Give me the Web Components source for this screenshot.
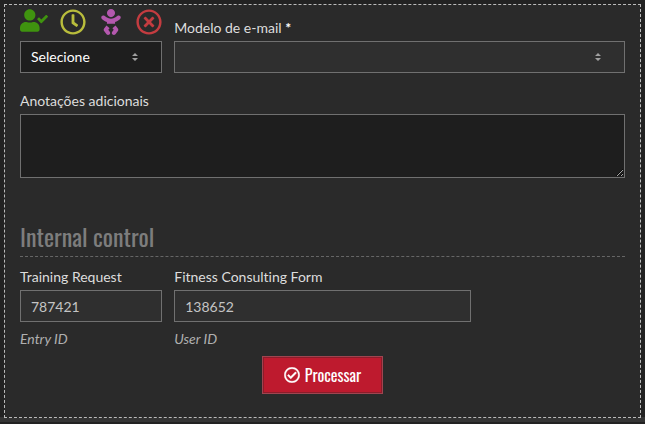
<!DOCTYPE html>
<html lang="pt-BR">
<head>
<meta charset="utf-8">
<meta name="viewport" content="width=device-width, initial-scale=1">
<title>Processar</title>
<style>
  body {
    --color-panel: #2a2a2a;
    --color-field: #2f2f2f;
    --color-dark: #1e1e1e;
    --color-border: #707070;
    --color-label: #ddd;
    --color-value: #c4c4c4;
    --color-muted: #b0b0b0;
    --color-title: #7d7d7d;
    --color-red: #be1a2e;
    --font-narrow: Oswald, "Liberation Sans Narrow", "Roboto Condensed", "Liberation Sans", sans-serif;

    margin: 0;
    padding: 4px;
    color-scheme: dark;
    font: 14px/20px Lato, sans-serif;
    font-variant-ligatures: none;
    color: var(--color-label);
    background: linear-gradient(to top, #343434 5px, #222 5px);
  }
</style>
</head>
<body>

<request-panel>
  <form-row>
    <status-select>Selecione</status-select>
    <template-select class="wide">Modelo de e-mail</template-select>
  </form-row>
  <notes-field>Anotações adicionais</notes-field>
  <section-title>Internal control</section-title>
  <form-row>
    <id-field value="787421" hint="Entry ID">Training Request</id-field>
    <id-field class="half" value="138652" hint="User ID">Fitness Consulting Form</id-field>
  </form-row>
  <process-button>Processar</process-button>
</request-panel>

<script>
const arrows = `url("data:image/svg+xml,%3Csvg xmlns='http://www.w3.org/2000/svg' width='6' height='10'%3E%3Cpath d='M0 4L3 1l3 3zM0 6l3 3 3-3z' fill='%23a0a0a0'/%3E%3C/svg%3E")`;

// shared by every control
const fieldStyle = `
  * { box-sizing: border-box; }
  label { display: block; }
  input, select, textarea {
    display: block;
    width: 100%;
    height: 32px;
    margin: 0;
    padding: 0 10px;
    border: 1px solid var(--color-border);
    border-radius: 0;
    font: inherit;
    color: var(--color-value);
    background-color: var(--color-field);
  }
  select {
    appearance: none;
    background-image: ${arrows};
    background-repeat: no-repeat;
    background-position: right 23px center;
  }
`;

class RequestPanel extends HTMLElement {
  constructor() {
    super();
    this.attachShadow({ mode: 'open' }).innerHTML = `
      <style>
        :host { display: block; }
        form {
          padding: 4px 15px 23px;
          border: 1px dashed #bbb;
          background: var(--color-panel);
        }
      </style>
      <form><slot></slot></form>
    `;
  }
}

class FormRow extends HTMLElement {
  constructor() {
    super();
    this.attachShadow({ mode: 'open' }).innerHTML = `
      <style>
        :host {
          display: grid;
          grid-template-columns: repeat(4, 1fr);
          gap: 12px;
          align-items: end;
        }
        ::slotted(.half) { grid-column: span 2; }
        ::slotted(.wide) { grid-column: span 3; }
      </style>
      <slot></slot>
    `;
  }
}

class StatusSelect extends HTMLElement {
  constructor() {
    super();
    this.attachShadow({ mode: 'open' }).innerHTML = `
      <style>
        ${fieldStyle}
        :host { display: block; }
        .icons {
          display: flex;
          justify-content: space-between;
          height: 32px;
        }
        svg { width: 26px; height: 26px; }
        .check { width: 28px; height: 23px; color: #3f930f; }
        .clock { color: #b9bd3c; }
        .baby { color: #b458ae; }
        .cross { color: #c43c40; }
        select { color: #fff; background-color: var(--color-dark); }
      </style>
      <div class="icons">
        <svg class="check" viewBox="0 0 640 512" fill="currentColor"><path d="M224 256c70.7 0 128-57.3 128-128S294.7 0 224 0 96 57.3 96 128s57.3 128 128 128zm89.6 32h-16.7c-22.2 10.2-46.9 16-72.9 16s-50.6-5.8-72.9-16h-16.7C60.2 288 0 348.2 0 422.4V464c0 26.5 21.5 48 48 48h352c26.5 0 48-21.5 48-48v-41.6c0-74.2-60.2-134.4-134.4-134.4zm323-128.4l-27.8-28.1c-4.6-4.7-12.1-4.7-16.8-.1l-104.8 104-45.5-45.8c-4.6-4.7-12.1-4.7-16.8-.1l-28.1 27.9c-4.7 4.6-4.7 12.1-.1 16.8l81.7 82.3c4.6 4.7 12.1 4.7 16.8.1l141.3-140.2c4.6-4.7 4.7-12.2.1-16.8z"/></svg>
        <svg class="clock" viewBox="0 0 512 512" fill="currentColor"><path d="M256 8C119 8 8 119 8 256s111 248 248 248 248-111 248-248S393 8 256 8zm0 448c-110.5 0-200-89.5-200-200S145.5 56 256 56s200 89.5 200 200-89.5 200-200 200zm61.8-104.4l-84.9-61.7c-3.1-2.3-4.9-5.9-4.9-9.7V116c0-6.6 5.4-12 12-12h32c6.6 0 12 5.4 12 12v141.7l66.8 48.6c5.4 3.9 6.5 11.4 2.6 16.8L334.6 349c-3.9 5.3-11.4 6.5-16.8 2.6z"/></svg>
        <svg class="baby" viewBox="0 0 384 512" fill="currentColor"><path d="M192 160c44.2 0 80-35.8 80-80S236.2 0 192 0s-80 35.8-80 80 35.8 80 80 80zm-53.4 248.8l25.6-32-61.5-51.2L56.8 383c-11.4 14.2-11.7 34.4-.8 49l48 64c7.9 10.5 19.9 16 32 16 8.3 0 16.8-2.6 24-8 17.7-13.2 21.2-38.3 8-56l-29.4-39.2zm142.7-83.2l-61.5 51.2 25.6 32L216 448c-13.2 17.7-9.7 42.8 8 56 7.2 5.4 15.6 8 24 8 12.2 0 24.2-5.5 32-16l48-64c10.9-14.6 10.6-34.8-.8-49l-45.9-57.4zM376.7 145c-12.7-18.1-37.6-22.4-55.7-9.8l-40.6 28.5c-52.7 37-124.2 37-176.8 0L63 135.3C44.9 122.6 20 127 7.3 145-5.4 163.1-1 188 17 200.7l40.6 28.5c17 11.9 35.4 20.9 54.4 27.9V288h160v-30.8c19-7 37.4-16 54.4-27.9l40.6-28.5c18.1-12.8 22.4-37.7 9.7-55.8z"/></svg>
        <svg class="cross" viewBox="0 0 512 512" fill="currentColor"><path d="M256 8C119 8 8 119 8 256s111 248 248 248 248-111 248-248S393 8 256 8zm0 448c-110.5 0-200-89.5-200-200S145.5 56 256 56s200 89.5 200 200-89.5 200-200 200zm101.8-262.2L295.6 256l62.2 62.2c4.7 4.7 4.7 12.3 0 17l-22.6 22.6c-4.7 4.7-12.3 4.7-17 0L256 295.6l-62.2 62.2c-4.7 4.7-12.3 4.7-17 0l-22.6-22.6c-4.7-4.7-4.7-12.3 0-17l62.2-62.2-62.2-62.2c-4.7-4.7-4.7-12.3 0-17l22.6-22.6c4.7-4.7 12.3-4.7 17 0l62.2 62.2 62.2-62.2c4.7-4.7 12.3-4.7 17 0l22.6 22.6c4.7 4.7 4.7 12.3 0 17z"/></svg>
      </div>
      <select aria-label="Status"><option>${this.textContent}</option></select>
    `;
  }
}

class TemplateSelect extends HTMLElement {
  constructor() {
    super();
    this.attachShadow({ mode: 'open' }).innerHTML = `
      <style>
        ${fieldStyle}
        :host { display: block; }
        label { margin-bottom: 3px; }
        b { color: #fff; }
      </style>
      <label for="model"><slot></slot> <b>*</b></label>
      <select id="model" required><option></option></select>
    `;
  }
}

class NotesField extends HTMLElement {
  constructor() {
    super();
    this.attachShadow({ mode: 'open' }).innerHTML = `
      <style>
        ${fieldStyle}
        :host { display: block; margin-top: 18px; }
        label { margin-bottom: 3px; }
        textarea {
          height: 64px;
          padding: 6px 10px;
          resize: vertical;
          background-color: var(--color-dark);
        }
      </style>
      <label for="notes"><slot></slot></label>
      <textarea id="notes"></textarea>
    `;
  }
}

class SectionTitle extends HTMLElement {
  constructor() {
    super();
    this.attachShadow({ mode: 'open' }).innerHTML = `
      <style>
        :host { display: block; margin: 42px 0 10px; }
        h2 {
          margin: 0;
          padding-bottom: 4px;
          border-bottom: 1px dashed #666;
          font: 24px/32px var(--font-narrow);
          color: var(--color-title);
        }
      </style>
      <h2><slot></slot></h2>
    `;
  }
}

class IdField extends HTMLElement {
  constructor() {
    super();
    this.attachShadow({ mode: 'open' }).innerHTML = `
      <style>
        ${fieldStyle}
        :host { display: block; }
        label { margin-bottom: 3px; }
        .hint {
          margin-top: 7px;
          font-style: italic;
          color: var(--color-muted);
        }
      </style>
      <label for="id"><slot></slot></label>
      <input id="id" type="text" value="${this.getAttribute('value')}" aria-describedby="hint">
      <div class="hint" id="hint">${this.getAttribute('hint')}</div>
    `;
  }
}

class ProcessButton extends HTMLElement {
  constructor() {
    super();
    this.attachShadow({ mode: 'open' }).innerHTML = `
      <style>
        :host { display: flex; justify-content: center; margin-top: 7px; }
        button {
          display: flex;
          align-items: center;
          gap: 5px;
          height: 38px;
          padding: 0 21px;
          border: 1px solid #a04450;
          box-shadow: inset 0 0 0 1px #8c1c2a;
          font: 16px/24px var(--font-narrow);
          color: #fff;
          background: var(--color-red);
        }
        svg { width: 16px; height: 16px; }
      </style>
      <button type="button">
        <svg viewBox="0 0 512 512" fill="currentColor" stroke="currentColor" stroke-width="12"><path d="M256 8C119.033 8 8 119.033 8 256s111.033 248 248 248 248-111.033 248-248S392.967 8 256 8zm0 48c110.532 0 200 89.451 200 200 0 110.532-89.451 200-200 200-110.532 0-200-89.451-200-200 0-110.532 89.451-200 200-200m140.204 130.267l-22.536-22.718c-4.667-4.705-12.265-4.736-16.97-.068L215.346 303.697l-59.792-60.277c-4.667-4.705-12.265-4.736-16.97-.069l-22.719 22.536c-4.705 4.667-4.736 12.265-.068 16.971l90.781 91.516c4.667 4.705 12.265 4.736 16.97.068l172.589-171.204c4.704-4.668 4.734-12.266.067-16.971z"/></svg>
        <slot></slot>
      </button>
    `;
  }
}

customElements.define('request-panel', RequestPanel);
customElements.define('form-row', FormRow);
customElements.define('status-select', StatusSelect);
customElements.define('template-select', TemplateSelect);
customElements.define('notes-field', NotesField);
customElements.define('section-title', SectionTitle);
customElements.define('id-field', IdField);
customElements.define('process-button', ProcessButton);
</script>
</body>
</html>
